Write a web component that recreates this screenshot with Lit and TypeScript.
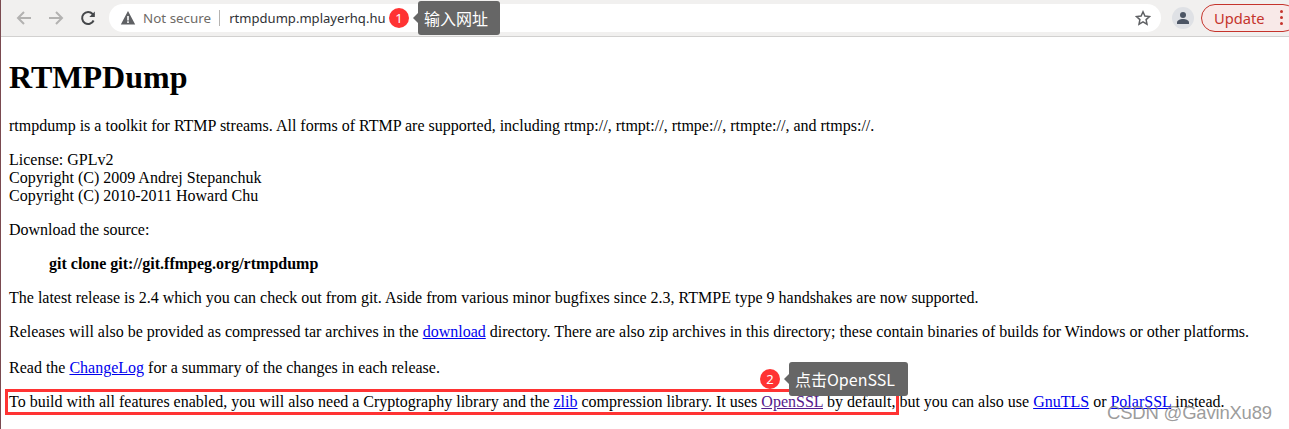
import { LitElement, html, css } from "lit";
import { customElement } from "lit/decorators.js";

@customElement("app-root")
export class AppRoot extends LitElement {
  static styles = css`
    :host { display: block; position: relative; width: 1289px; height: 429px; overflow: hidden; background: #fff; }
    .win { border-left: 1px solid #7a4a50; height: 429px; box-sizing: border-box; }
    .bar { height: 37px; box-sizing: border-box; background: #f1f0ef; border-bottom: 1px solid #d2d1d0; display: flex; align-items: center; padding: 0 0 1px 0; font-family: "Noto Sans", sans-serif; }
    .nav { width: 16px; height: 16px; margin-left: 16px; flex: none; }
    .nav.first { margin-left: 15px; }
    .omni { margin-left: 13px; flex: 1; height: 28px; background: #fff; border-radius: 14px; display: flex; align-items: center; padding: 0 10px 0 11px; font-size: 13.4px; letter-spacing: .01px; }
    .warn { width: 16px; height: 16px; flex: none; }
    .ns { color: #6e6a66; margin-left: 7px; }
    .sep { width: 1px; height: 16px; background: #b5b3b1; margin: 0 9px 0 8px; }
    .url { color: #2f3135; font-size: 13.05px; }
    .star { margin-left: auto; width: 16px; height: 16px; }
    .avatar { width: 22px; height: 22px; margin-left: 11px; border-radius: 50%; background: #dfe1e5; flex: none; display: flex; align-items: center; justify-content: center; }
    .update { margin: 0 -8px 0 7px; width: 96px; height: 28px; box-sizing: border-box; flex: none; border: 1px solid #c5342c; border-radius: 14px; background: #f8e9e8; color: #c5342c; display: flex; align-items: center; padding-left: 12px; font-size: 14.7px; }
    .dots { margin-left: 15px; display: flex; flex-direction: column; gap: 3px; }
    .dots i { width: 3px; height: 3px; border-radius: 50%; background: #c5342c; display: block; }

    .page { padding: 0 8px; font: 16px/18px "Liberation Serif", serif; color: #000; white-space: nowrap; }
    h1 { font-size: 32px; line-height: 37px; margin: 0; padding-top: 22px; }
    p { margin: 0; }
    .p1 { margin-top: 21px; }
    .p2, .p3, .p4, .p5, .p7 { margin-top: 16px; }
    .pre { margin: 16px 0 0 40px; font-weight: bold; }
    .p6 { margin-top: 18px; }
    a { color: #0000ee; }
    a.v { color: #551a8b; }

    .badge { position: absolute; width: 20px; height: 20px; border-radius: 50%; background: #ff3333; color: #fff; font: 13px/20px "Noto Sans", sans-serif; text-align: center; }
    .tip { position: absolute; background: #666; color: #fff; border-radius: 3px; height: 34px; box-sizing: border-box; padding: 0 13px 0 6px; font: 16px/34px "Noto Sans CJK SC", "Noto Sans", sans-serif; white-space: nowrap; }
    .tip::before { content: ""; position: absolute; left: -5px; top: 12px; border: 5px solid transparent; border-left: 0; border-right-color: #666; }
    .t1 { left: 418px; top: 1px; padding-right: 12px; }
    .t2 { left: 789px; top: 362px; }
    .b1 { left: 389px; top: 8px; }
    .b2 { left: 760px; top: 369px; }
    .box { position: absolute; left: 5px; top: 389px; width: 894px; height: 26px; box-sizing: border-box; border: 3px solid #ff3333; }
    .wm { position: absolute; left: 1107px; top: 401px; font: 18.5px/24px "Liberation Sans", sans-serif; letter-spacing: -.2px; color: rgba(130,130,130,.8); white-space: nowrap; }
  `;

  render() {
    return html`
      <div class="win">
        <div class="bar">
          <svg class="nav first" viewBox="0 0 16 16" fill="none" stroke="#b3b2b1" stroke-width="2"><path d="M15 8H2M8 2L2 8l6 6"/></svg>
          <svg class="nav" viewBox="0 0 16 16" fill="none" stroke="#b3b2b1" stroke-width="2"><path d="M1 8h13M8 2l6 6-6 6"/></svg>
          <svg class="nav" viewBox="0 0 16 16" fill="none" stroke="#45474a" stroke-width="2"><path d="M13.6 10.5A6 6 0 1 1 12.6 4L14 5.5"/><path d="M14.8 1.5v5.5H9.3z" fill="#45474a" stroke="none"/></svg>
          <div class="omni">
            <svg class="warn" viewBox="0 0 16 16"><path d="M8 1L.8 14.5h14.4z" fill="#5f6164"/><path d="M7.2 6h1.6v4.500H7.2zM7.2 11.300h1.600v1.600H7.2z" fill="#fff"/></svg>
            <span class="ns">Not secure</span><span class="sep"></span><span class="url">rtmpdump.mplayerhq.hu</span>
            <svg class="star" viewBox="0 0 16 16" fill="none" stroke="#5f6164" stroke-width="1.5"><path d="M8 1.800l1.900 4.200 4.600.5-3.400 3.100.9 4.600L8 11.900l-4 2.300.9-4.600L1.500 6.500l4.600-.5z"/></svg>
          </div>
          <div class="avatar"><svg width="14" height="14" viewBox="0 0 14 14" fill="#4c5564"><circle cx="7" cy="4" r="3"/><path d="M1 13v-1.500C1 9.300 4 8 7 8s6 1.300 6 3.500V13z"/></svg></div>
          <div class="update">Update<span class="dots"><i></i><i></i><i></i></span></div>
        </div>
        <div class="page">
          <h1>RTMPDump</h1>
          <p class="p1">rtmpdump is a toolkit for RTMP streams. All forms of RTMP are supported, including rtmp://, rtmpt://, rtmpe://, rtmpte://, and rtmps://.</p>
          <p class="p2">License: GPLv2<br>Copyright (C) 2009 Andrej Stepanchuk<br>Copyright (C) 2010-2011 Howard Chu</p>
          <p class="p3">Download the source:</p>
          <p class="pre">git clone git://git.ffmpeg.org/rtmpdump</p>
          <p class="p4">The latest release is 2.4 which you can check out from git. Aside from various minor bugfixes since 2.3, RTMPE type 9 handshakes are now supported.</p>
          <p class="p5">Releases will also be provided as compressed tar archives in the <a href="#">download</a> directory. There are also zip archives in this directory; these contain binaries of builds for Windows or other platforms.</p>
          <p class="p6">Read the <a href="#">ChangeLog</a> for a summary of the changes in each release.</p>
          <p class="p7">To build with all features enabled, you will also need a Cryptography library and the <a href="#">zlib</a> compression library. It uses <a class="v" href="#">OpenSSL</a> by default, but you can also use <a href="#">GnuTLS</a> or <a href="#">PolarSSL</a> instead.</p>
        </div>
      </div>
      <div class="box"></div>
      <div class="badge b1">1</div>
      <div class="tip t1">输入网址</div>
      <div class="badge b2">2</div>
      <div class="tip t2">点击OpenSSL</div>
      <div class="wm">CSDN @GavinXu89</div>
    `;
  }
}
